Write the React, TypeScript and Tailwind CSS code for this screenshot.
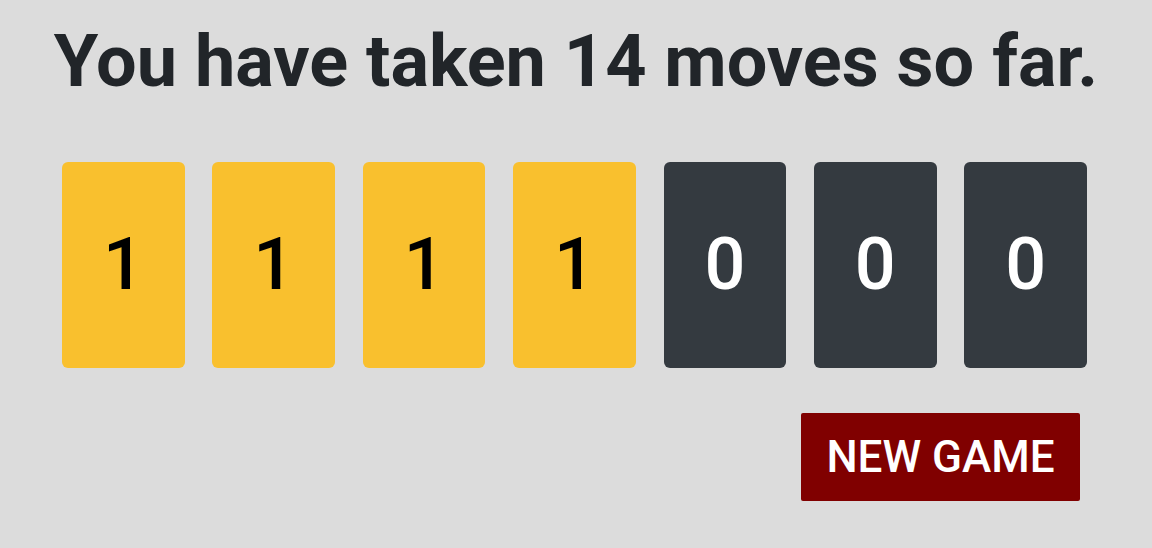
import React from "react";

const digits = [1, 1, 1, 1, 0, 0, 0];

export default function App() {
  return (
    <div className="min-h-[548px] w-full bg-[#dcdcdc] font-['Roboto',sans-serif] pt-[19px]">
      <h1 className="text-center text-[72px] leading-[1.2] font-bold text-[#212529]">
        You have taken 14 moves so far.
      </h1>
      <div className="pl-[62px] pr-[65px] mt-[57px] grid grid-cols-7 gap-x-[27.7px]">
        {digits.map((d, i) => (
          <div
            key={i}
            className={
              d === 1
                ? "h-[206px] rounded-[6px] bg-[#f9c02e] text-black flex items-center justify-center text-[72px] font-medium leading-none"
                : "h-[206px] rounded-[6px] bg-[#343a40] text-white flex items-center justify-center text-[72px] font-medium leading-none"
            }
          >
            {d}
          </div>
        ))}
      </div>
      <div className="flex justify-end pr-[72px] mt-[45px]">
        <button className="h-[88px] w-[279px] rounded-[2px] bg-[#800000] text-white text-[44px] font-medium leading-none flex items-center justify-center">
          NEW GAME
        </button>
      </div>
    </div>
  );
}
